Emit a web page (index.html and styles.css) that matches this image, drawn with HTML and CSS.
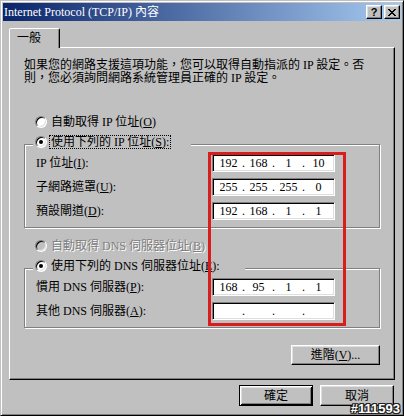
FILE: index.html
```html
<!DOCTYPE html>
<html lang="zh-Hant">
<head>
<meta charset="utf-8">
<title>Internet Protocol (TCP/IP) 內容</title>
<link rel="stylesheet" href="styles.css">
</head>
<body>
<div class="window">
  <div class="titlebar">
    <span class="title">Internet Protocol (TCP/IP) 內容</span>
    <div class="caption-btns">
      <span class="cap-btn help">?</span>
      <span class="cap-btn close"><svg width="8" height="7" viewBox="0 0 8 7" shape-rendering="crispEdges"><path fill="#000" d="M0 0h2v1H0zM6 0h2v1H6zM1 1h2v1H1zM5 1h2v1H5zM2 2h4v1H2zM3 3h2v1H3zM2 4h4v1H2zM1 5h2v1H1zM5 5h2v1H5zM0 6h2v1H0zM6 6h2v1H6z"/></svg></span>
    </div>
  </div>
  <div class="body">
    <div class="tabs"><div class="tab">一般</div></div>
    <div class="panel">
      <p class="intro">如果您的網路支援這項功能，您可以取得自動指派的 IP 設定。否<br>則，您必須詢問網路系統管理員正確的 IP 設定。</p>
      <div class="radio-row auto-ip"><span class="radio"></span><span>自動取得 IP 位址(<u>O</u>)</span></div>
      <div class="group ip-group">
        <div class="legend legend-ip"><span class="radio checked"></span><span class="focus">使用下列的 IP 位址(<u>S</u>):</span></div>
        <div class="row first"><span class="label">IP 位址(<u>I</u>):</span><div class="ipbox"><span class="oct">192</span><span class="dot">.</span><span class="oct">168</span><span class="dot">.</span><span class="oct">1</span><span class="dot">.</span><span class="oct">10</span></div></div>
        <div class="row"><span class="label">子網路遮罩(<u>U</u>):</span><div class="ipbox"><span class="oct">255</span><span class="dot">.</span><span class="oct">255</span><span class="dot">.</span><span class="oct">255</span><span class="dot">.</span><span class="oct">0</span></div></div>
        <div class="row"><span class="label">預設閘道(<u>D</u>):</span><div class="ipbox"><span class="oct">192</span><span class="dot">.</span><span class="oct">168</span><span class="dot">.</span><span class="oct">1</span><span class="dot">.</span><span class="oct">1</span></div></div>
      </div>
      <div class="radio-row disabled auto-dns"><span class="radio"></span><span>自動取得 DNS 伺服器位址(<u>B</u>)</span></div>
      <div class="group dns-group">
        <div class="legend legend-dns"><span class="radio checked"></span><span class="legend-text">使用下列的 DNS 伺服器位址(<u>E</u>):</span></div>
        <div class="row first"><span class="label">慣用 DNS 伺服器(<u>P</u>):</span><div class="ipbox"><span class="oct">168</span><span class="dot">.</span><span class="oct">95</span><span class="dot">.</span><span class="oct">1</span><span class="dot">.</span><span class="oct">1</span></div></div>
        <div class="row"><span class="label">其他 DNS 伺服器(<u>A</u>):</span><div class="ipbox"><span class="oct"></span><span class="dot">.</span><span class="oct"></span><span class="dot">.</span><span class="oct"></span><span class="dot">.</span><span class="oct"></span></div></div>
      </div>
      <div class="adv-row"><button class="btn adv">進階(<u>V</u>)...</button></div>
      <div class="redmark"></div>
    </div>
    <div class="dialog-btns"><button class="btn dlg default">確定</button><button class="btn dlg">取消</button></div>
  </div>
  <div class="watermark">#111593</div>
</div>
</body>
</html>
```
FILE: styles.css
```css
* { box-sizing: border-box; }
html, body { margin: 0; padding: 0; }
body {
  width: 404px;
  height: 416px;
  overflow: hidden;
  background: #c0c0c0;
  font-family: "Liberation Serif", "Noto Sans CJK TC", serif;
  font-size: 12px;
  color: #000;
}
u { text-decoration-thickness: 1px; text-underline-offset: 1px; }

.window {
  position: relative;
  width: 404px;
  height: 416px;
  display: flex;
  flex-direction: column;
  padding: 2px;
  background: #c0c0c0;
  border: 1px solid;
  border-color: #c0c0c0 #000 #000 #c0c0c0;
  box-shadow: inset 1px 1px #fff, inset -1px -1px #808080;
}

.titlebar {
  flex: none;
  height: 18px;
  display: flex;
  align-items: center;
  justify-content: space-between;
  padding: 0 1px 0 1px;
  background: linear-gradient(to right, #0a246a, #a6caf0);
  color: #fff;
}
.title { line-height: 14px; white-space: nowrap; }
.caption-btns { display: flex; gap: 2px; }
.cap-btn {
  width: 16px;
  height: 14px;
  display: flex;
  align-items: center;
  justify-content: center;
  background: #c0c0c0;
  color: #000;
  border: 1px solid;
  border-color: #fff #000 #000 #fff;
  box-shadow: inset -1px -1px #808080, inset 1px 1px #dfdfdf;
}
.help { font: bold 11px/12px "Liberation Sans", sans-serif; }

.body {
  flex: 1;
  display: flex;
  flex-direction: column;
  padding: 0 6px;
}

.tabs {
  margin-top: 7px;
  height: 19px;
  display: flex;
  align-items: flex-start;
}
.tab {
  position: relative;
  z-index: 1;
  width: 51px;
  height: 20px;
  padding-left: 7px;
  line-height: 18px;
  background: #c0c0c0;
  border: 1px solid;
  border-bottom: none;
  border-color: #fff #000 transparent #fff;
  border-radius: 2px 2px 0 0;
  box-shadow: inset -1px 0 #808080;
}

.panel {
  position: relative;
  flex: none;
  height: 333px;
  display: flex;
  flex-direction: column;
  padding: 11px 14px 0;
  border: 1px solid;
  border-color: #fff #000 #000 #fff;
  box-shadow: inset -1px -1px #808080;
}

.intro { margin: 0; line-height: 13px; white-space: nowrap; }

.radio-row {
  display: flex;
  align-items: center;
  height: 14px;
  line-height: 14px;
  margin-left: 11px;
  white-space: nowrap;
}
.auto-ip { margin-top: 30px; }
.auto-dns { margin-top: 11px; }
.disabled { color: #808080; text-shadow: 1px 1px 0 #fff; }

.radio {
  position: relative;
  flex: none;
  width: 12px;
  height: 12px;
  margin-right: 4px;
  border-radius: 50%;
  background: #fff;
  border: 1px solid;
  border-color: #808080 #fff #fff #808080;
  box-shadow: inset 1px 1px #000, inset -1px -1px #dfdfdf;
}
.disabled .radio { background: #c0c0c0; }
.radio.checked::after {
  content: "";
  position: absolute;
  left: 3px;
  top: 3px;
  width: 4px;
  height: 4px;
  border-radius: 50%;
  background: #000;
}

.group {
  border: 1px solid #808080;
  box-shadow: inset 1px 1px #fff, 1px 1px #fff;
  padding: 0 0 7px 11px;
}
.ip-group { margin-top: 15px; }
.dns-group { margin-top: 15px; }

.legend {
  display: flex;
  align-items: center;
  height: 14px;
  line-height: 14px;
  margin: -10px 0 0 -3px;
  padding: 0 2px;
  background: #c0c0c0;
  white-space: nowrap;
}
.legend-ip { width: 158px; }
.legend-dns { width: 212px; }
.focus {
  line-height: 12px;
  padding: 0 1px;
  margin-left: -1px;
  outline: 1px dotted #000;
}

.row {
  display: flex;
  align-items: center;
  height: 18px;
  margin-top: 6px;
}
.row.first { margin-top: 5px; }
.label { width: 176px; line-height: 14px; white-space: nowrap; }

.ipbox {
  width: 123px;
  height: 18px;
  display: flex;
  align-items: center;
  padding-left: 3px;
  background: #fff;
  border: 1px solid;
  border-color: #808080 #fff #fff #808080;
  box-shadow: inset 1px 1px #000, inset -1px -1px #dfdfdf;
  line-height: 14px;
}
.oct { width: 25px; text-align: center; }
.dot { width: 5px; text-align: center; }

.btn {
  font-family: "Liberation Serif", "Noto Sans CJK TC", serif;
  font-size: 12px;
  line-height: 14px;
  color: #000;
  padding: 0;
  background: #c0c0c0;
  border: 1px solid;
  border-color: #fff #000 #000 #fff;
  box-shadow: inset -1px -1px #808080, inset 1px 1px #dfdfdf;
}
.btn.default {
  border-color: #000;
  box-shadow: inset 1px 1px #fff, inset -1px -1px #000, inset 2px 2px #dfdfdf, inset -2px -2px #808080;
}

.adv-row { display: flex; justify-content: flex-end; margin-top: 17px; }
.btn.adv { width: 89px; height: 20px; }

.dialog-btns {
  display: flex;
  justify-content: flex-end;
  gap: 7px;
  margin-top: 5px;
  padding-right: 1px;
}
.btn.dlg { width: 74px; height: 21px; }

.redmark {
  position: absolute;
  left: 198px;
  top: 104px;
  width: 138px;
  height: 174px;
  border: 3px solid #d91c1c;
  pointer-events: none;
}

.watermark {
  position: absolute;
  right: 3px;
  bottom: 0;
  font: bold 13px/13px "Liberation Sans", sans-serif;
  color: #fff;
  text-shadow: 1px 0 #222, -1px 0 #222, 0 1px #222, 0 -1px #222, 1px 1px #222, -1px -1px #222, 1px -1px #222, -1px 1px #222;
}
```
